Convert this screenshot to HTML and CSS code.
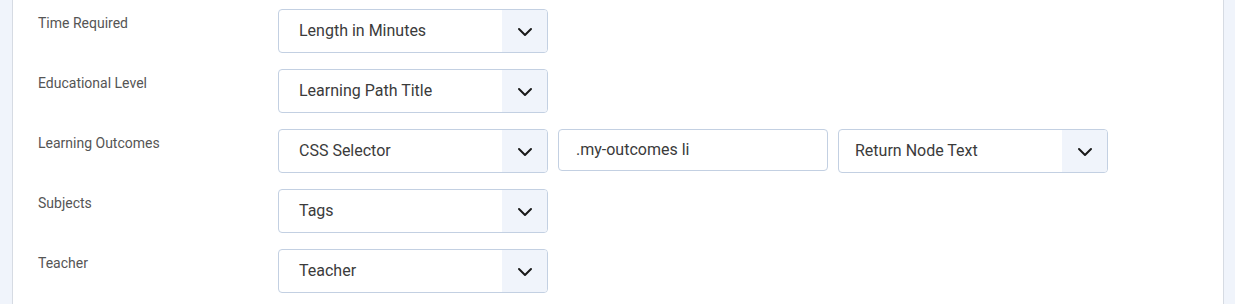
FILE: index.html
```html
<!DOCTYPE html>
<html lang="en">
<head>
    <meta charset="UTF-8">
    <meta name="viewport" content="width=device-width, initial-scale=1.0">
    <title>Field Mapping</title>
    <link rel="stylesheet" href="styles.css">
</head>
<body>
    <div class="panel">
        <div class="field-row">
            <label class="field-label">Time Required</label>
            <div class="select">
                <span class="select-value">Length in Minutes</span>
                <span class="select-arrow"><svg width="16" height="10" viewBox="0 0 16 10"><path d="M2 2l6 6 6-6" fill="none" stroke="#1a1a1a" stroke-width="2" stroke-linecap="round" stroke-linejoin="round"/></svg></span>
            </div>
        </div>

        <div class="field-row">
            <label class="field-label">Educational Level</label>
            <div class="select">
                <span class="select-value">Learning Path Title</span>
                <span class="select-arrow"><svg width="16" height="10" viewBox="0 0 16 10"><path d="M2 2l6 6 6-6" fill="none" stroke="#1a1a1a" stroke-width="2" stroke-linecap="round" stroke-linejoin="round"/></svg></span>
            </div>
        </div>

        <div class="field-row">
            <label class="field-label">Learning Outcomes</label>
            <div class="select">
                <span class="select-value">CSS Selector</span>
                <span class="select-arrow"><svg width="16" height="10" viewBox="0 0 16 10"><path d="M2 2l6 6 6-6" fill="none" stroke="#1a1a1a" stroke-width="2" stroke-linecap="round" stroke-linejoin="round"/></svg></span>
            </div>
            <input type="text" class="text-input" value=".my-outcomes li">
            <div class="select select-narrow">
                <span class="select-value">Return Node Text</span>
                <span class="select-arrow"><svg width="16" height="10" viewBox="0 0 16 10"><path d="M2 2l6 6 6-6" fill="none" stroke="#1a1a1a" stroke-width="2" stroke-linecap="round" stroke-linejoin="round"/></svg></span>
            </div>
        </div>

        <div class="field-row">
            <label class="field-label">Subjects</label>
            <div class="select">
                <span class="select-value">Tags</span>
                <span class="select-arrow"><svg width="16" height="10" viewBox="0 0 16 10"><path d="M2 2l6 6 6-6" fill="none" stroke="#1a1a1a" stroke-width="2" stroke-linecap="round" stroke-linejoin="round"/></svg></span>
            </div>
        </div>

        <div class="field-row">
            <label class="field-label">Teacher</label>
            <div class="select">
                <span class="select-value">Teacher</span>
                <span class="select-arrow"><svg width="16" height="10" viewBox="0 0 16 10"><path d="M2 2l6 6 6-6" fill="none" stroke="#1a1a1a" stroke-width="2" stroke-linecap="round" stroke-linejoin="round"/></svg></span>
            </div>
        </div>
    </div>
</body>
</html>
```

FILE: styles.css
```css
* {
    margin: 0;
    padding: 0;
    box-sizing: border-box;
}

body {
    font-family: Roboto, "Liberation Sans", Arial, sans-serif;
    background-color: #f0f4fb;
    overflow: hidden;
}

.panel {
    margin: 0 11px 0 12px;
    background-color: #fff;
    border-left: 1px solid #d6dbe3;
    border-right: 1px solid #d6dbe3;
    padding: 9px 25px 40px 25px;
    min-height: 304px;
}

.field-row {
    display: flex;
    align-items: flex-start;
    gap: 10px;
    margin-bottom: 16px;
}

.field-label {
    width: 230px;
    font-size: 14px;
    line-height: 20px;
    color: #555;
    padding-top: 4px;
}

.select {
    display: flex;
    width: 270px;
    height: 44px;
    border: 1px solid #c3d0e2;
    border-radius: 4px;
    overflow: hidden;
    background-color: #fff;
}

.select-value {
    flex: 1;
    display: flex;
    align-items: center;
    padding-left: 20px;
    padding-bottom: 2px;
    font-size: 16px;
    color: #3b3b3b;
}

.select-narrow .select-value {
    padding-left: 16px;
}

.select-arrow {
    width: 45px;
    display: flex;
    align-items: center;
    justify-content: center;
    padding-top: 1px;
    background-color: #f0f4fb;
}

.text-input {
    width: 270px;
    height: 42px;
    border: 1px solid #c3d0e2;
    border-radius: 4px;
    padding-left: 17px;
    padding-bottom: 1px;
    font-family: inherit;
    font-size: 16px;
    color: #3b3b3b;
    outline: none;
}
```
